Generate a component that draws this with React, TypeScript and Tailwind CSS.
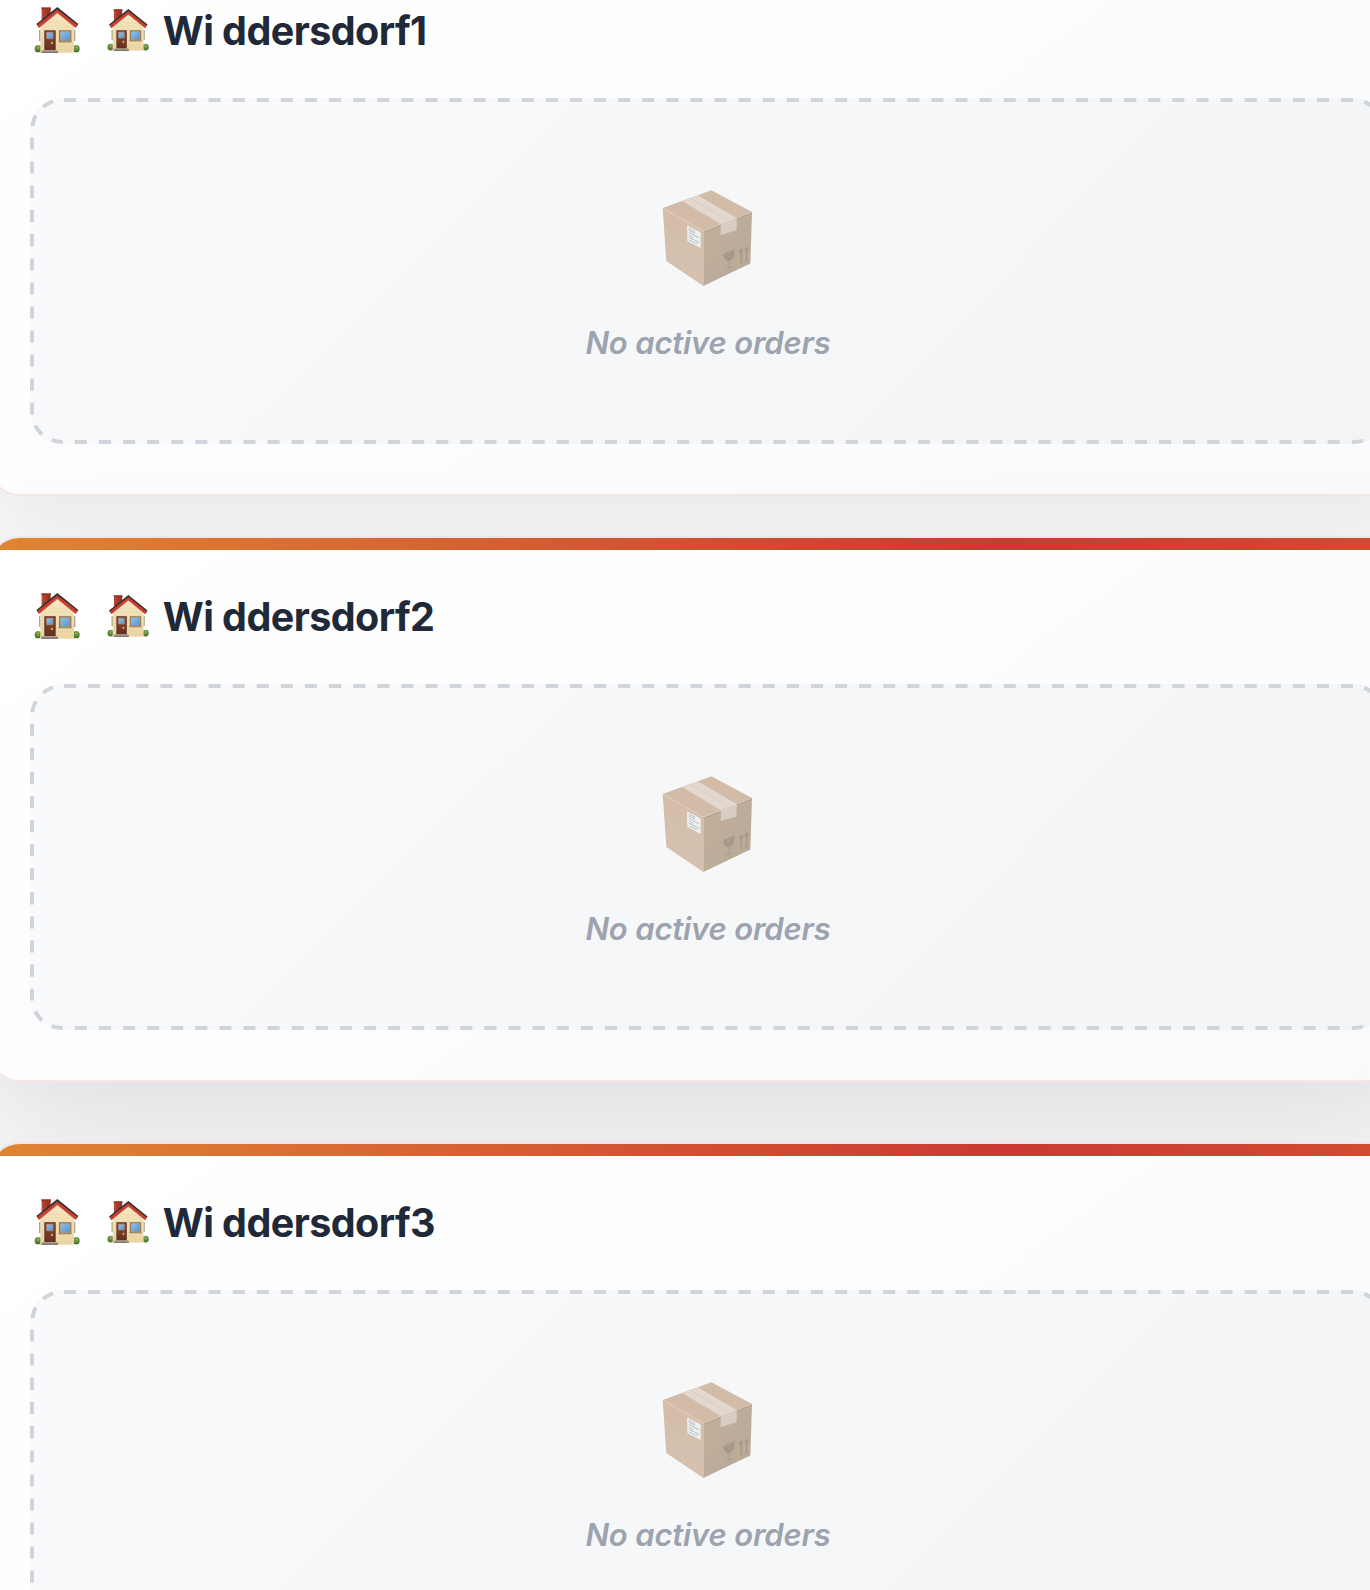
function House({ className }: { className: string }) {
  return (
    <svg viewBox="100 18 144 144" className={className} aria-hidden="true">
      <defs>
        <linearGradient id="wall" x1="0" x2="0" y1="0" y2="1">
          <stop offset="0" stopColor="#f6e8c4" />
          <stop offset="1" stopColor="#ecd5a4" />
        </linearGradient>
        <linearGradient id="door" x1="0" x2="0" y1="0" y2="1">
          <stop offset="0" stopColor="#8a4a35" />
          <stop offset="1" stopColor="#64301f" />
        </linearGradient>
        <linearGradient id="glass" x1="0" x2="1" y1="0" y2="1">
          <stop offset="0" stopColor="#8fc4ea" />
          <stop offset="1" stopColor="#5591cb" />
        </linearGradient>
        <linearGradient id="brick" x1="0" x2="1" y1="0" y2="0">
          <stop offset="0" stopColor="#bb4636" />
          <stop offset="1" stopColor="#86301f" />
        </linearGradient>
        <radialGradient id="bush" cx=".5" cy=".3" r=".7">
          <stop offset="0" stopColor="#8db352" />
          <stop offset="1" stopColor="#3f6423" />
        </radialGradient>
      </defs>
      <path d="M118 90h5v33h-5zM222 90h5v33h-5z" fill="#b3a58d" />
      <ellipse cx="115" cy="146" rx="10" ry="11" fill="url(#bush)" />
      <ellipse cx="230" cy="146" rx="10" ry="11" fill="url(#bush)" />
      <path d="M126 24h27v30l-27 24z" fill="url(#brick)" />
      <path d="M125 22h29v5h-29z" fill="#963325" />
      <path d="M122 76 173 32l50 44v82H122z" fill="url(#wall)" />
      <path d="M124 90h98M124 102h98M124 114h98M124 126h98M124 138h98M124 149h98M136 78h76M147 67h52" stroke="#dcc496" strokeWidth="1" opacity=".65" />
      <path d="M110 72 173 21l63 51-5 7-58-46-58 46z" fill="#33312f" />
      <path d="M112 75 173 28l61 47-6 9-55-45-55 45z" fill="#c23d2f" />
      <path d="m119 81 54-44 54 44" fill="none" stroke="#d9614a" strokeWidth="2" />
      <path d="M134 91h34v60h-34z" fill="#5a2d20" />
      <path d="M137 94h28v56h-28z" fill="url(#door)" />
      <path d="M141 97h19v19h-19z" fill="url(#glass)" stroke="#b68f78" strokeWidth="2" />
      <circle cx="157" cy="129" r="3.5" fill="#e3a548" />
      <path d="M178 91h37v36h-37z" fill="#8b6c53" />
      <path d="M182 95h29v27h-29z" fill="url(#glass)" stroke="#b9a58d" strokeWidth="2" />
      <path d="M176 122h40v4h-40z" fill="#a18a6d" />
      <path d="M128 150h45v5h-45z" fill="#aaa095" />
      <path d="M125 154h50v5h-50z" fill="#83796f" />
    </svg>
  );
}

function Parcel({ className }: { className: string }) {
  return (
    <svg viewBox="60 55 285 295" className={className} aria-hidden="true">
      <defs>
        <linearGradient id="front" x1="0" x2="0" y1="0" y2="1">
          <stop offset="0" stopColor="#d3bda9" />
          <stop offset="1" stopColor="#d6c1b1" />
        </linearGradient>
        <linearGradient id="side" x1="0" x2="1" y1="0" y2="1">
          <stop offset="0" stopColor="#c3b09d" />
          <stop offset="1" stopColor="#b8a896" />
        </linearGradient>
      </defs>
      <path d="m68 113 146-53 122 65-146 57z" fill="#d2bca8" />
      <path d="m68 113 122 69v165L79 272z" fill="url(#front)" />
      <path d="m190 182 146-57-5 155-141 67z" fill="url(#side)" />
      <path d="m69 114 121 69 145-57" fill="none" stroke="#dfcdbd" strokeWidth="3" />
      <path d="m190 186 145-58" fill="none" stroke="#aa9381" strokeWidth="2" />
      <path d="m126 92 47-17 118 69-48 18z" fill="#e3d8ce" />
      <path d="m150 83 117 68" stroke="#d3c7bc" strokeWidth="2" />
      <path d="m243 162 48-18-2 37-47 13z" fill="#d6cdc4" />
      <path d="m141 165 41 22v46l-40-21z" fill="#eef0f1" />
      <path d="m146 173 19 10m-19-4 19 10m-18-2 31 16m-31-8 13 7m-13-1 31 16m-31-8 24 12" stroke="#b9bfc2" strokeWidth="3" />
      <path d="m250 251 34-13c0 18-5 29-15 33-11 4-17-3-19-20z" fill="#a49889" />
      <path d="m267 269v25m-9 3 18-6m-16-43 9 8-4 8" fill="none" stroke="#a49889" strokeWidth="2.5" />
      <path d="m270 246-6 10 4 5" fill="none" stroke="#bcab99" strokeWidth="3" />
      <path d="M303 244v33m17-40v33" fill="none" stroke="#a49889" strokeWidth="4" />
      <path d="m298 281 28-11" fill="none" stroke="#ab9d8c" strokeWidth="2.5" />
      <path d="m296 249 7-15 7 10zm17-7 7-15 7 10z" fill="#a49889" />
    </svg>
  );
}

function DashedOutline() {
  return (
    <svg className="absolute inset-0 size-full" viewBox="0 0 678 173" aria-hidden="true">
      <rect width="678" height="173" rx="16" fill="none" stroke="#d1d5db" strokeWidth="4" strokeDasharray="6.05 5.997" strokeDashoffset="-1" />
    </svg>
  );
}

function LocationCard({ name, className }: { name: string; className: string }) {
  return (
    <section className={`${className} relative h-[273px] shrink-0 overflow-hidden rounded-2xl border border-[#f8e5e4] border-t-[#f1e6e6] bg-linear-145 from-white to-[#f8fafc]`}>
      <div className="h-1.5 bg-[linear-gradient(90deg,#e08533_0px,#ca3932_506px,#e08533_1246px)]" />
      <div className="px-5 pt-[17px]">
        <header className="mb-[18px] flex h-8 items-center">
          <House className="ml-[2px] size-6 shrink-0 -translate-x-[0.5px]" />
          <House className="ml-3 size-[22px] shrink-0" />
          <h2 className="mt-[2.6px] ml-[6.4px] -translate-y-[0.5px] text-[19.75px] leading-8 font-bold tracking-[-0.29px] whitespace-pre text-[#1f2937]">{name}</h2>
        </header>
        <div className="relative flex h-[173px] flex-col items-center overflow-hidden rounded-2xl bg-linear-135 from-[#f9fafb] to-[#f3f4f6] pt-[45.2px]">
          <DashedOutline />
          <Parcel className="h-[49.2px] w-[47.5px] translate-y-[0.3px]" />
          <p className="mt-[17px] text-[15.5px] leading-6 font-semibold tracking-[-0.08px] text-[#9ca3af] italic">No active orders</p>
        </div>
      </div>
    </section>
  );
}

export default function App() {
  return (
    <div className="h-[1590px] w-[1370px] overflow-hidden bg-[#f8f8f8]">
      <main className="-ml-3 flex h-[795px] w-[720px] origin-top-left scale-200 flex-col font-['Inter',sans-serif]">
        <LocationCard name="Wi ddersdorf1" className="-mt-[25px] shadow-[0_10px_30px_rgba(0,0,0,0.05)]" />
        <LocationCard name="Wi ddersdorf2" className="mt-5 shadow-[0_20px_60px_rgba(0,0,0,0.1)]" />
        <LocationCard name="Wi ddersdorf3" className="mt-[30px] shadow-[0_10px_30px_rgba(0,0,0,0.05)]" />
      </main>
    </div>
  );
}
